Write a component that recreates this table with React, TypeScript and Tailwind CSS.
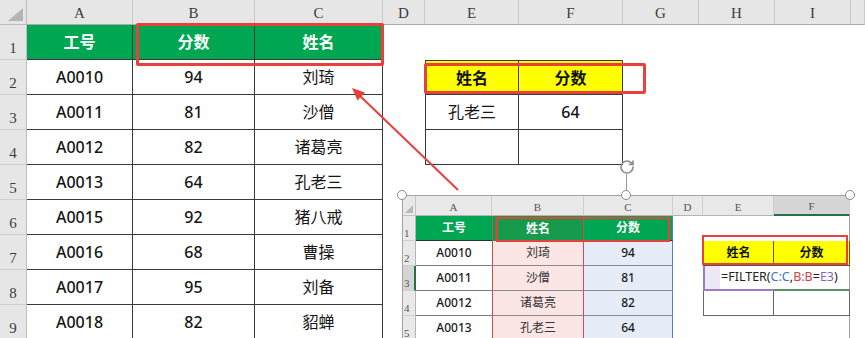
import { RotateCw } from "lucide-react";

const people = [
  ["A0010", "94", "刘琦"],
  ["A0011", "81", "沙僧"],
  ["A0012", "82", "诸葛亮"],
  ["A0013", "64", "孔老三"],
  ["A0015", "92", "猪八戒"],
  ["A0016", "68", "曹操"],
  ["A0017", "95", "刘备"],
  ["A0018", "82", "貂蝉"],
];

const letters = ["A", "B", "C", "D", "E", "F", "G", "H", "I", ""];
const sans = "font-['Noto_Sans','Noto_Sans_CJK_SC',sans-serif]";
const serif = "font-['Liberation_Serif',serif]";

function MainCell({ r, c }: { r: number; c: number }) {
  const base = "flex items-center justify-center text-[16px] leading-none";
  const line = "border-[#3a3a3a]";

  if (c <= 2) {
    if (r === 1) {
      return (
        <div className={`${base} border-r border-b ${line} bg-[#00a651] font-bold text-white`}>
          {["工号", "分数", "姓名"][c]}
        </div>
      );
    }
    const v = people[r - 2][c];
    return (
      <div className={`${base} border-r border-b ${line} text-[#151515] ${c < 2 ? "font-medium" : ""}`}>
        {v}
      </div>
    );
  }

  // second table E2:F4
  if ((c === 4 || c === 5) && r >= 2 && r <= 4) {
    const edge = `${c === 4 ? "border-l" : ""} ${r === 2 ? "border-t" : ""} border-r border-b ${line}`;
    if (r === 2) {
      return (
        <div className={`${base} ${edge} bg-[#ffff00] font-bold text-[#111]`}>
          {c === 4 ? "姓名" : "分数"}
        </div>
      );
    }
    if (r === 3) {
      return (
        <div className={`${base} ${edge} text-[#151515] ${c === 5 ? "font-medium" : ""}`}>
          {c === 4 ? "孔老三" : "64"}
        </div>
      );
    }
    return <div className={edge} />;
  }

  return <div />;
}

function MiniSheet() {
  const miniLetters = ["A", "B", "C", "D", "E", "F"];
  const rows = [
    ["A0010", "刘琦", "94"],
    ["A0011", "沙僧", "81"],
    ["A0012", "诸葛亮", "82"],
    ["A0013", "孔老三", "64"],
  ];
  const txt = "flex items-center justify-center text-[12px] leading-none";

  return (
    <div className={`absolute left-[402px] top-[195px] w-[448px] h-[150px] border-t border-l border-r border-[#a3a3a3] bg-white ${sans}`}>
      <div className="grid grid-cols-[13px_76px_92px_89px_30px_71px_76px] grid-rows-[20px_repeat(5,25px)]">
        {/* header row */}
        <div className="bg-[#e9e9e9] border-r border-b border-[#c4c4c4] flex items-end justify-end p-[2px]">
          <div className="w-[8px] h-[8px] bg-[#b8b8b8] [clip-path:polygon(100%_0,100%_100%,0_100%)]" />
        </div>
        {miniLetters.map((l, i) => (
          <div
            key={l}
            className={`flex items-end justify-center pb-[2px] text-[11px] leading-none text-[#555] border-r border-[#cfcfcf] ${serif} ${
              i === 5 ? "bg-[#d6d6d6] border-b-2 border-b-[#217346]" : "bg-[#e9e9e9] border-b border-b-[#b5b5b5]"
            }`}
          >
            {l}
          </div>
        ))}

        {[1, 2, 3, 4, 5].map((r) => (
          <div key={r} className="contents">
            <div
              className={`flex items-end pl-[1px] pb-[1px] text-[11px] leading-none text-[#555] border-b border-[#cfcfcf] ${serif} ${
                r === 3 ? "bg-[#d4d4d4] border-r-2 border-r-[#217346]" : "bg-[#e9e9e9] border-r border-r-[#b5b5b5]"
              }`}
            >
              {r}
            </div>
            {/* A */}
            {r === 1 ? (
              <div className={`${txt} bg-[#00a651] font-bold text-white border-b border-[#2f2f2f]`}>工号</div>
            ) : (
              <div className={`${txt} font-medium text-[#1a1a1a] border-b border-[#7a7a7a]`}>{rows[r - 2][0]}</div>
            )}
            {/* B */}
            {r === 1 ? (
              <div className={`${txt} bg-[#169a4c] font-bold text-white border-l border-r border-[#d24c4c]`}>姓名</div>
            ) : (
              <div className={`${txt} bg-[#fbe5e5] text-[#333] border-l border-r border-[#d24c4c] border-b border-b-[#8a8a8a]`}>
                {rows[r - 2][1]}
              </div>
            )}
            {/* C */}
            {r === 1 ? (
              <div className={`${txt} bg-[#00a651] font-bold text-white border-r border-r-[#4f7fd6] border-b border-b-[#2f2f2f]`}>分数</div>
            ) : (
              <div className={`${txt} bg-[#e7edf8] font-medium text-[#1a1a1a] border-r border-r-[#4f7fd6] border-b border-b-[#8a8a8a]`}>
                {rows[r - 2][2]}
              </div>
            )}
            {/* D */}
            <div />
            {/* E, F */}
            {(r === 1 || r === 5) && (
              <>
                <div />
                <div />
              </>
            )}
            {r === 2 && (
              <>
                <div className={`${txt} bg-[#ffff00] font-bold text-[#111] border-l border-r border-b border-[#555]`}>姓名</div>
                <div className={`${txt} bg-[#ffff00] font-bold text-[#111] border-r border-b border-[#555]`}>分数</div>
              </>
            )}
            {r === 3 && (
              <>
                <div className="relative flex items-center border-l-2 border-b-2 border-[#9a7cc8]">
                  <div className="h-full w-[15px] bg-[#ece8f6]" />
                  <div className="absolute left-[16px] top-0 h-full flex items-center whitespace-nowrap text-[12.5px] text-[#222]">
                    =FILTER(<span className="text-[#3d74c8]">C:C</span>,<span className="text-[#d0434b]">B:B</span>=
                    <span className="text-[#8a62c0]">E3</span>)
                  </div>
                </div>
                <div className="border-b-2 border-[#5a8f68]" />
              </>
            )}
            {r === 4 && (
              <>
                <div className="border-l border-r border-b border-[#666]" />
                <div className="border-r border-b border-[#666]" />
              </>
            )}
          </div>
        ))}
      </div>
    </div>
  );
}

export default function App() {
  return (
    <div className={`relative w-[865px] h-[338px] overflow-hidden bg-white ${sans}`}>
      <div className="grid grid-cols-[27px_106px_122px_128px_42px_94px_104px_76px_76px_76px_14px] grid-rows-[25px_repeat(9,35px)]">
        <div className="bg-[#e6e6e6] border-r border-b border-[#bdbdbd] flex items-end justify-end p-[3px]">
          <div className="w-[15px] h-[13px] bg-[#b4b4b4] [clip-path:polygon(100%_0,100%_100%,0_100%)]" />
        </div>
        {letters.map((l, i) => (
          <div
            key={i}
            className={`bg-[#e6e6e6] border-r border-[#cacaca] border-b border-b-[#a9a9a9] flex items-end justify-center pb-[3px] text-[15px] leading-none text-[#3c3c3c] ${serif}`}
          >
            {l}
          </div>
        ))}
        {[1, 2, 3, 4, 5, 6, 7, 8, 9].map((r) => (
          <div key={r} className="contents">
            <div
              className={`bg-[#e6e6e6] border-r border-[#bdbdbd] border-b border-b-[#cfcfcf] flex items-end justify-center pb-[3px] text-[15px] leading-none text-[#3c3c3c] ${serif}`}
            >
              {r}
            </div>
            {letters.map((_, c) => (
              <MainCell key={c} r={r} c={c} />
            ))}
          </div>
        ))}
      </div>

      {/* highlight boxes */}
      <div className="absolute left-[136px] top-[23px] w-[248px] h-[43px] border-[3px] border-[#e8413c] rounded-[2px]" />
      <div className="absolute left-[424px] top-[63px] w-[222px] h-[31px] border-[3px] border-[#e8413c] rounded-[2px]" />

      {/* arrow */}
      <svg className="absolute left-0 top-0 pointer-events-none" width="865" height="338">
        <line x1="458" y1="190" x2="358" y2="94" stroke="#e8413c" strokeWidth="2" />
        <polygon points="352,88 365,92.5 357.5,100.5" fill="#e8413c" />
      </svg>

      {/* pasted picture */}
      <MiniSheet />
      <div className="absolute left-[496px] top-[217px] w-[174px] h-[25px] border-2 border-[#e8413c]" />
      <div className="absolute left-[702px] top-[235px] w-[146px] h-[30px] border-2 border-[#e8413c]" />

      {/* selection handles */}
      <div className="absolute left-[626px] top-[174px] w-px h-[21px] bg-[#9a9a9a]" />
      <RotateCw className="absolute left-[619px] top-[159px] text-[#8e8e8e]" size={16} strokeWidth={2.6} />
      <div className="absolute left-[397px] top-[190px] w-[10px] h-[10px] rounded-full border border-[#8a8a8a] bg-white" />
      <div className="absolute left-[621px] top-[190px] w-[10px] h-[10px] rounded-full border border-[#8a8a8a] bg-white" />
      <div className="absolute left-[845px] top-[190px] w-[10px] h-[10px] rounded-full border border-[#8a8a8a] bg-white" />
    </div>
  );
}
